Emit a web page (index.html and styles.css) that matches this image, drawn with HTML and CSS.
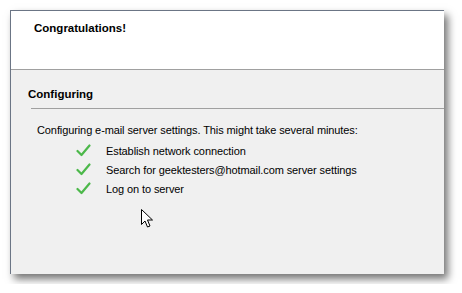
FILE: index.html
```html
<!DOCTYPE html>
<html lang="en">
<head>
    <meta charset="UTF-8">
    <title>Congratulations!</title>
    <link rel="stylesheet" href="styles.css">
</head>
<body>
    <div class="window">
        <div class="header">
            <h1>Congratulations!</h1>
        </div>
        <div class="content">
            <h2>Configuring</h2>
            <div class="rule"></div>
            <p class="intro">Configuring e-mail server settings. This might take several minutes:</p>
            <ul class="steps">
                <li>
                    <svg class="check" width="15" height="13" viewBox="0 0 15 13"><path d="M1.5 7 L5.5 11 L13.5 1.5" fill="none" stroke="#4cb84a" stroke-width="2.2" stroke-linecap="round" stroke-linejoin="round"/></svg>
                    <span>Establish network connection</span>
                </li>
                <li>
                    <svg class="check" width="15" height="13" viewBox="0 0 15 13"><path d="M1.5 7 L5.5 11 L13.5 1.5" fill="none" stroke="#4cb84a" stroke-width="2.2" stroke-linecap="round" stroke-linejoin="round"/></svg>
                    <span>Search for geektesters@hotmail.com server settings</span>
                </li>
                <li>
                    <svg class="check" width="15" height="13" viewBox="0 0 15 13"><path d="M1.5 7 L5.5 11 L13.5 1.5" fill="none" stroke="#4cb84a" stroke-width="2.2" stroke-linecap="round" stroke-linejoin="round"/></svg>
                    <span>Log on to server</span>
                </li>
            </ul>
            <svg class="cursor" width="13" height="20" viewBox="0 0 13 20"><path d="M0.5 0.5 L0.5 15.5 L4 12 L6.5 18 L9 17 L6.5 11 L11.5 11 Z" fill="#fff" stroke="#000" stroke-width="1" stroke-linejoin="miter"/></svg>
        </div>
    </div>
</body>
</html>
```

FILE: styles.css
```css
body {
    margin: 0;
    padding: 10px;
    background: #fff;
    font-family: "Liberation Sans", Arial, sans-serif;
    font-size: 11px;
    letter-spacing: -0.1px;
    color: #000;
}
.window {
    width: 433px;
    height: 263px;
    border-left: 1px solid #6b7585;
    border-top: 1px solid #6b7585;
    background: #f0f0f0;
    box-shadow: 4px 5px 8px rgba(0, 0, 0, 0.55);
    display: flex;
    flex-direction: column;
}
.header {
    height: 58px;
    background: #fff;
    border-bottom: 1px solid #a0a0a0;
    padding: 0 0 0 23px;
}
.header h1 {
    margin: 0;
    padding-top: 11px;
    font-size: 11.5px;
    letter-spacing: 0;
    font-weight: bold;
}
.content {
    position: relative;
    flex: 1;
    padding: 0 0 0 17px;
}
.content h2 {
    margin: 0;
    padding-top: 18px;
    font-size: 11.5px;
    letter-spacing: 0;
    font-weight: bold;
}
.rule {
    margin: 8px 0 0 3px;
    border-top: 1px solid #a0a0a0;
}
.intro {
    margin: 15px 0 0 9px;
}
.steps {
    list-style: none;
    margin: 5px 0 0 0;
    padding: 0 0 0 48px;
}
.steps li {
    display: flex;
    align-items: center;
    height: 19px;
}
.check {
    margin-right: 15px;
}
.cursor {
    position: absolute;
    left: 130px;
    top: 139px;
}
```
